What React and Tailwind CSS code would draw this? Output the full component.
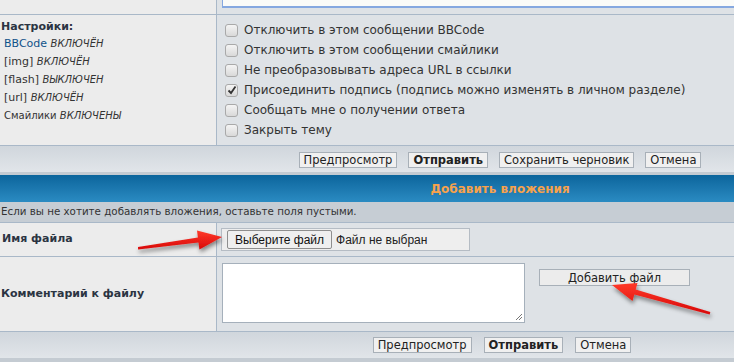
import React from "react";

const options = [
  { label: "Отключить в этом сообщении BBCode", checked: false },
  { label: "Отключить в этом сообщении смайлики", checked: false },
  { label: "Не преобразовывать адреса URL в ссылки", checked: false },
  { label: "Присоединить подпись (подпись можно изменять в личном разделе)", checked: true },
  { label: "Сообщать мне о получении ответа", checked: false },
  { label: "Закрыть тему", checked: false },
];

const Checkbox = ({ checked }) => (
  <span className="w-[13px] h-[13px] rounded-[3px] border border-[#a9a9a9] bg-gradient-to-b from-[#f4f4f4] to-[#d9d9d9] flex items-center justify-center shrink-0">
    {checked && (
      <svg width="10" height="10" viewBox="0 0 10 10">
        <path d="M1.5 5.5 L4 8 L8.5 1.5" stroke="#333" strokeWidth="1.8" fill="none" />
      </svg>
    )}
  </span>
);

const Btn = ({ children, bold, className = "" }) => (
  <button
    className={`h-[16px] px-[4px] bg-[#f0f0f0] border border-[#a8b0b8] text-[11.5px] leading-[14px] text-[#222] ${
      bold ? "font-bold" : ""
    } ${className}`}
  >
    {children}
  </button>
);

const App = () => {
  return (
    <div className="relative w-[734px] h-[362px] overflow-hidden bg-[#dee2e6] font-['DejaVu_Sans',sans-serif] text-[#333]">
      <div className="w-[1000px]">
        {/* top row with message textarea edge */}
        <div className="flex h-[15px] border-b border-[#a9b8c8]">
          <div className="w-[217px] bg-[#ececec] border-r border-[#a9b8c8]" />
          <div className="flex-1 pl-[5px]">
            <div className="h-[8px] bg-[#fbfbf8] border-l border-b-2 border-[#86a8e0]" />
          </div>
        </div>

        {/* settings row */}
        <div className="flex h-[131px] border-b border-[#a9b8c8]">
          <div className="w-[217px] bg-[#ececec] border-r border-[#a9b8c8] pl-[1px] pt-[4px]">
            <div className="text-[11px] font-bold text-[#2b3442] leading-[16px]">Настройки:</div>
            <div className="text-[11px] leading-[18px] pl-[3px]">
              <div>
                <span className="text-[#105289]">BBCode</span> <span className="italic text-[10px]">ВКЛЮЧЁН</span>
              </div>
              <div>
                [img] <span className="italic text-[10px]">ВКЛЮЧЁН</span>
              </div>
              <div>
                [flash] <span className="italic text-[10px]">ВЫКЛЮЧЕН</span>
              </div>
              <div>
                [url] <span className="italic text-[10px]">ВКЛЮЧЁН</span>
              </div>
              <div className="text-[10px]">
                Смайлики <span className="italic">ВКЛЮЧЕНЫ</span>
              </div>
            </div>
          </div>
          <div className="flex-1 pl-[8px] pt-[5px] flex flex-col">
            {options.map((o) => (
              <label key={o.label} className="flex items-center gap-[6px] h-[20px] text-[12px] text-[#333]">
                <Checkbox checked={o.checked} />
                {o.label}
              </label>
            ))}
          </div>
        </div>

        {/* button bar */}
        <div className="h-[26px] bg-gradient-to-b from-[#d0d6dc] to-[#e1e5e9] flex items-center justify-center gap-[11px] pt-[1px]">
          <Btn>Предпросмотр</Btn>
          <Btn bold>Отправить</Btn>
          <Btn>Сохранить черновик</Btn>
          <Btn>Отмена</Btn>
        </div>
        <div className="h-[3px] bg-[#c4cbd2]" />

        {/* attachments header */}
        <div className="h-[27px] bg-gradient-to-b from-[#0b659c] to-[#2a8bc2] flex items-center justify-center">
          <span className="text-[12px] font-bold text-[#f7a24c]">Добавить вложения</span>
        </div>
        <div className="h-[21px] bg-[#c6cdd4] border-b border-[#a9b8c8] flex items-center pl-[1px] text-[10.3px] text-[#333]">
          Если вы не хотите добавлять вложения, оставьте поля пустыми.
        </div>

        {/* file name row */}
        <div className="flex h-[34px] border-b border-[#a9b8c8]">
          <div className="w-[217px] bg-[#ececec] border-r border-[#a9b8c8] flex items-center pl-[2px] text-[11px] font-bold text-[#2b3442]">
            Имя файла
          </div>
          <div className="flex-1 pl-[4px] pt-[5px]">
            <div className="w-[249px] h-[23px] bg-[#eeeeee] border border-[#b5bcc4] flex items-center pl-[5px] gap-[4px]">
              <span className="h-[19px] px-[7px] bg-[#efefef] border border-[#8e8e8e] rounded-[2px] flex items-center font-['Liberation_Sans',sans-serif] text-[12px] text-[#111]">
                Выберите файл
              </span>
              <span className="font-['Liberation_Sans',sans-serif] text-[12px] text-[#222]">Файл не выбран</span>
            </div>
          </div>
        </div>

        {/* comment row */}
        <div className="flex h-[75px] border-b border-[#a9b8c8]">
          <div className="w-[217px] bg-[#ececec] border-r border-[#a9b8c8] flex items-center pl-[1px] pt-[1px] text-[11px] font-bold text-[#2b3442]">
            Комментарий к файлу
          </div>
          <div className="flex-1 flex items-start pl-[5px] pt-[6px]">
            <div className="relative w-[303px] h-[60px] bg-white border border-[#a5b0bb]">
              <svg className="absolute right-[1px] bottom-[1px]" width="8" height="8" viewBox="0 0 8 8">
                <path d="M7 1 L1 7 M7 4 L4 7" stroke="#777" strokeWidth="1" />
              </svg>
            </div>
            <Btn className="ml-[14px] mt-[6px] w-[151px] !h-[17px] !bg-[#ececec]">Добавить файл</Btn>
          </div>
        </div>

        {/* bottom bar */}
        <div className="h-[26px] bg-gradient-to-b from-[#d0d6dc] to-[#e1e5e9] flex items-center justify-center gap-[12px] pl-[4px]">
          <Btn>Предпросмотр</Btn>
          <Btn bold>Отправить</Btn>
          <Btn>Отмена</Btn>
        </div>
        <div className="h-[5px] bg-[#c4cbd2]" />
      </div>

      {/* red annotation arrows */}
      <svg className="absolute left-0 top-0 pointer-events-none" width="734" height="362">
        <defs>
          <filter id="sh" x="-20%" y="-50%" width="140%" height="200%">
            <feDropShadow dx="1" dy="3" stdDeviation="2" floodColor="#000" floodOpacity="0.45" />
          </filter>
          <linearGradient id="rd" x1="0" y1="0" x2="0" y2="1">
            <stop offset="0" stopColor="#ff3a2a" />
            <stop offset="1" stopColor="#d80808" />
          </linearGradient>
        </defs>
        <polygon
          filter="url(#sh)"
          fill="url(#rd)"
          points="138,247 197.9,237.6 197,230.5 222,237 199.4,249.5 198.5,242.6 138.1,249.5"
        />
        <polygon
          filter="url(#sh)"
          fill="url(#rd)"
          points="710.3,312 635.7,289.6 637.5,283 612,285 632.5,301 634.3,294.4 709.7,314.5"
        />
      </svg>
    </div>
  );
};

export default App;
